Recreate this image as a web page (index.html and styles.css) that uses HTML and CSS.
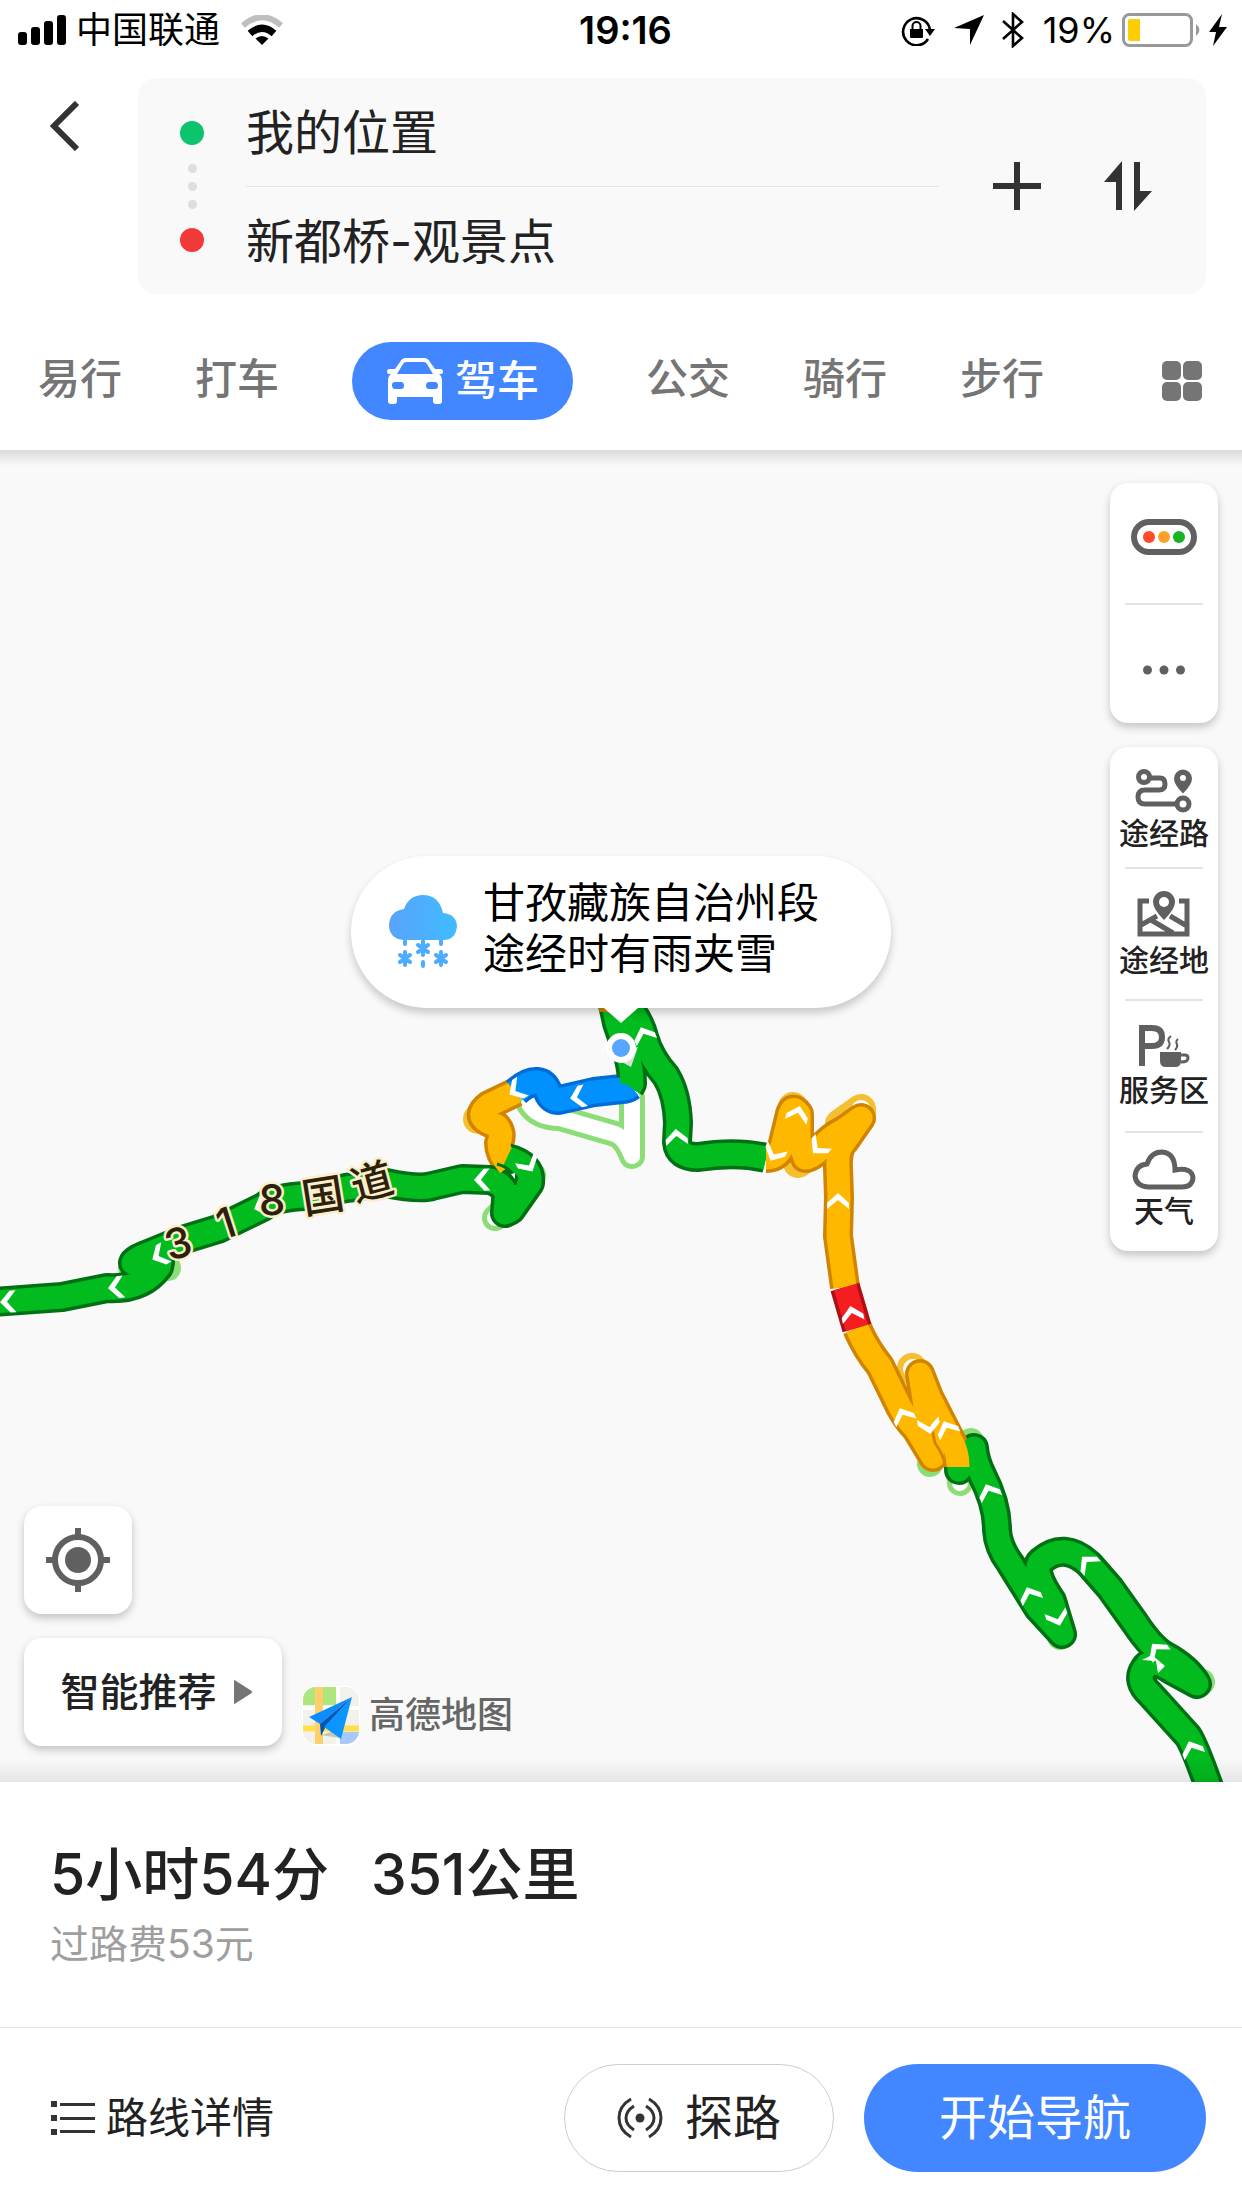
FILE: index.html
```html
<!DOCTYPE html>
<html lang="zh-CN">
<head>
<meta charset="utf-8">
<meta name="viewport" content="width=device-width">
<title>路线规划</title>
<link rel="stylesheet" href="styles.css">
</head>
<body>
<header class="header">
  <div class="status">
    <div class="status-side">
      <svg class="signal" width="48" height="30" viewBox="0 0 48 30"><rect y="17" width="9" height="13" rx="3"/><rect x="13" y="12" width="9" height="18" rx="3"/><rect x="26" y="6" width="9" height="24" rx="3"/><rect x="39" width="9" height="30" rx="3"/></svg>
      <span class="carrier">中国联通</span>
      <svg width="42" height="30" viewBox="0 0 42 30"><path d="M2 10.500Q21 -6 40 10.500" fill="none" stroke="#bfbfbf" stroke-width="6"/><path d="M9 18.500Q21 8 33 18.500" fill="none" stroke="#000" stroke-width="7"/><path d="M21 30L14.500 23.500Q21 18.500 27.500 23.500Z"/></svg>
    </div>
    <time class="clock">19:16</time>
    <div class="status-side status-right">
      <svg width="36" height="32" viewBox="0 0 36 32"><path d="M27 25A13.500 13.500 0 1 1 29 16" fill="none" stroke="#000" stroke-width="2.600"/><path d="M24 15h10l-5 7zM9 15h13v8q0 1-1 1H10q-1 0-1-1z"/><path d="M11.500 16v-4a4 4 0 0 1 8 0v4" fill="none" stroke="#000" stroke-width="2"/></svg>
      <svg class="arrow" width="30" height="30" viewBox="0 0 30 30"><path d="M30 0L16 30V14L0 13z"/></svg>
      <svg class="bluetooth" width="22" height="36" viewBox="0 0 22 36"><path d="M1 9L20 26L11 34V2L20 10L1 27" fill="none" stroke="#000" stroke-width="2.600"/></svg>
      <span class="percent">19%</span>
      <svg class="battery" width="78" height="34" viewBox="0 0 78 34"><rect x="1.500" y="1.500" width="68" height="31" rx="6" fill="none" stroke="#999" stroke-width="3"/><path d="M8 6h10v22H8q-2 0-2-2V8q0-2 2-2z" fill="#fc0"/><path d="M74 11q7 6 0 12z" fill="#999"/></svg>
      <svg width="18" height="32" viewBox="0 0 18 32"><path d="M13 0L0 18h7L4 32L18 13h-8z"/></svg>
    </div>
  </div>

  <div class="search">
    <button class="back" type="button" aria-label="返回"><svg width="30" height="50" viewBox="0 0 30 50"><path d="M27 2L4 25L27 48" fill="none" stroke="#333" stroke-width="6"/></svg></button>
    <form class="trip">
      <div class="stops" aria-hidden="true"><i class="stop start"></i><i class="dot"></i><i class="dot"></i><i class="dot"></i><i class="stop end"></i></div>
      <div class="fields">
        <input class="field" type="text" aria-label="起点" value="我的位置">
        <input class="field" type="text" aria-label="终点" value="新都桥-观景点">
      </div>
      <button class="trip-button" type="button" aria-label="添加途经点"><svg width="48" height="48" viewBox="0 0 48 48"><path d="M24 0v48M0 24h48" stroke="#333" stroke-width="6"/></svg></button>
      <button class="trip-button" type="button" aria-label="交换起终点"><svg width="48" height="50" viewBox="0 0 48 50" fill="#333"><path d="M18 0V49H12V21H0zM30 50V1H36V30H48z"/></svg></button>
    </form>
  </div>

  <nav class="modes">
    <button class="mode" type="button">易行</button>
    <button class="mode" type="button">打车</button>
    <button class="mode active" type="button"><svg width="56" height="46" viewBox="0 0 56 46" fill="#fff"><path fill-rule="evenodd" d="M19 0H37Q41 0 43 4L48 11H54Q56 11 56 13.500Q56 16 54 16H52Q55 18 55 23V43Q55 46 52 46H49Q46 46 46 43V39H10V43Q10 46 7 46H4Q1 46 1 43V23Q1 18 4 16H2Q0 16 0 13.500Q0 11 2 11H8L13 4Q15 0 19 0zM19 4Q17 4 16 6L10 16H46L40 6Q39 4 37 4zM8 24Q5 24 5 27Q5 31 8 31H14Q17 31 17 27.500Q17 24 14 24zM42 24Q39 24 39 27.500Q39 31 42 31H48Q51 31 51 27.500Q51 24 48 24z"/></svg>驾车</button>
    <button class="mode" type="button">公交</button>
    <button class="mode" type="button">骑行</button>
    <button class="mode" type="button">步行</button>
    <button class="mode more" type="button" aria-label="更多"><svg width="40" height="40" viewBox="0 0 40 40" fill="#757575"><rect width="19" height="19" rx="5"/><rect x="21" width="19" height="19" rx="5"/><rect y="21" width="19" height="19" rx="5"/><rect x="21" y="21" width="19" height="19" rx="5"/></svg></button>
  </nav>
</header>

<main class="map">
  <svg class="roads" viewBox="0 450 1242 1332" preserveAspectRatio="xMidYMid slice" role="img" aria-label="318国道路线">
    <defs>
      <path id="west" d="M-20 1303L62 1297L107 1288Q142 1290 159 1267L160 1262L133 1263Q134 1259 153 1252L182 1240L218 1229L263 1207Q275 1197 307 1196L346 1188L386 1183Q420 1190 432 1186L462 1179L490 1180Q508 1186 506 1200L505 1213L511 1210L530 1183Q532 1164 507 1158"/>
      <path id="amber-west" d="M516 1092L489 1105Q475 1115 488 1122L497 1126Q503 1134 499 1143Q499 1154 509 1166"/>
      <path id="azure" d="M516 1092Q528 1081 537 1082Q545 1083 548 1092Q551 1100 559 1100L594 1092L622 1089Q627 1089 631 1086"/>
      <path id="centre" d="M630 1087L632 1084Q632 1068 627 1052L617 1023L612 1000M622 1000Q639 1017 644 1037Q650 1058 666 1076Q677 1094 678 1123L677 1142Q678 1157 698 1157Q736 1151 766 1158"/>
      <path id="amber-east" d="M766 1158Q780 1158 783 1143L790 1114Q793 1105 799 1114V1140L805 1158Q812 1158 822 1147Q830 1137 844 1130L861 1118L845 1141Q837 1148 838 1168L839 1197L838 1236L845 1287"/>
      <path id="crimson" d="M845 1287L857 1328"/>
      <path id="amber-south" d="M857 1328Q866 1349 880 1366L900 1407Q907 1420 916 1429L933 1457L920 1374L929 1397L951 1440Q958 1451 958 1467"/>
      <path id="south" d="M959 1467V1470L974 1448Q975 1461 982 1475Q997 1504 997 1530Q998 1547 1010 1563L1038 1608L1062 1634L1052 1601Q1031 1570 1041 1561Q1064 1541 1089 1564L1110 1588L1135 1623Q1151 1647 1164 1655Q1188 1668 1197 1684L1173 1671Q1151 1656 1144 1669Q1136 1681 1150 1694L1188 1736Q1194 1745 1208 1784L1215 1805"/>
      <path id="chevron" d="M0 -3L11 7V13L0 4L-11 13V7z"/>
    </defs>
    <g class="line ghost-green">
      <path d="M529 1104Q538 1118 560 1118L615 1134Q625 1138 632 1156V1098"/>
      <path d="M505 1208L495 1218M165 1268H168M135 1265L131 1268M530 1173L533 1175M974 1448L971 1441M959 1472L960 1483M933 1458L930 1464M1062 1634L1060 1637M1197 1684L1202 1682"/>
    </g>
    <g class="line ghost-white">
      <path d="M529 1104Q538 1118 560 1118L615 1134Q625 1138 632 1156V1098M505 1208L495 1218M959 1472L960 1483"/>
    </g>
    <g class="line ghost-amber"><path d="M861 1118V1109L840 1124M922 1380L912 1368M805 1158L798 1163M483 1114L478 1119M793 1110V1107"/></g>
    <g class="line ghost-white wide"><path d="M861 1118V1110M922 1380L913 1369"/></g>

    <g class="line edge">
      <use href="#amber-west" class="amber-edge"/>
      <use href="#azure" class="azure-edge"/>
      <use href="#west" class="green-edge"/>
      <use href="#centre" class="green-edge"/>
      <use href="#south" class="green-edge round"/>
      <use href="#amber-east" class="amber-edge"/>
      <use href="#amber-south" class="amber-edge"/>
      <use href="#crimson" class="crimson-edge"/>
    </g>
    <g class="line fill">
      <use href="#west" class="green"/>
      <use href="#amber-west" class="amber"/>
      <use href="#azure" class="azure"/>
      <use href="#centre" class="green"/>
      <use href="#south" class="green round"/>
      <use href="#amber-east" class="amber"/>
      <use href="#amber-south" class="amber"/>
      <use href="#crimson" class="crimson"/>
    </g>
    <path d="M511 1149L517 1149L526 1155L522 1178L508 1170L503 1166z" fill="#02bb1f"/>
    <path d="M497 1164Q512 1168 516 1180L515 1185" class="seam green-seam"/>
    <path d="M511 1174L515 1173L515 1179z" fill="#fff"/>
    <path d="M598 1008h13l-2 5q-4-2-9-1z" fill="#d18400"/>
    <path d="M931 1425L935 1443Q945 1457 945 1467" class="seam"/>

    <g fill="#fff">
      <use href="#chevron" transform="translate(3 1302) rotate(-93)"/>
      <use href="#chevron" transform="translate(111 1288) rotate(-97)"/>
      <use href="#chevron" transform="translate(155 1258) rotate(-118)"/>
      <use href="#chevron" transform="translate(257 1208) rotate(-110)"/>
      <use href="#chevron" transform="translate(477 1180) rotate(-92)"/>
      <use href="#chevron" transform="translate(531 1169) rotate(150)"/>
      <use href="#chevron" transform="translate(512 1093) rotate(-122)"/>
      <use href="#chevron" transform="translate(573 1098) rotate(-102)"/>
      <use href="#chevron" transform="translate(642 1030) rotate(-22)"/>
      <use href="#chevron" transform="translate(676 1132) rotate(-5)"/>
      <use href="#chevron" transform="translate(772 1158) rotate(207)"/>
      <use href="#chevron" transform="translate(799 1109) rotate(15)"/>
      <use href="#chevron" transform="translate(815 1151) rotate(222)"/>
      <use href="#chevron" transform="translate(838 1196)"/>
      <use href="#chevron" transform="translate(851 1309) rotate(-12)"/>
      <use href="#chevron" transform="translate(901 1411) rotate(-24)"/>
      <use href="#chevron" transform="translate(930 1431) rotate(170)"/>
      <use href="#chevron" transform="translate(945 1424) rotate(-24)"/>
      <use href="#chevron" transform="translate(987 1487) rotate(-22)"/>
      <use href="#chevron" transform="translate(1028 1590) rotate(-22)"/>
      <use href="#chevron" transform="translate(1059 1623) rotate(162)"/>
      <use href="#chevron" transform="translate(1084 1559) rotate(-42)"/>
      <use href="#chevron" transform="translate(1154 1646) rotate(-38)"/>
      <path d="M1142 1660L1152 1655L1165 1666L1158 1673L1156 1661z"/>
      <use href="#chevron" transform="translate(1190 1744) rotate(-22)"/>
    </g>
    <g class="road-name">
      <text transform="translate(178 1243) rotate(-15)" y="15">3</text>
      <text transform="translate(226 1223) rotate(-18)" y="15">1</text>
      <text transform="translate(272 1200) rotate(-2)" y="15">8</text>
      <text transform="translate(323 1196) rotate(-9)" y="15">国</text>
      <text transform="translate(372 1182) rotate(-15)" y="15">道</text>
    </g>
    <path d="M609 1055l22 12l7-20z" fill="#dcdcdc"/>
    <circle cx="621" cy="1048" r="15" fill="#fff"/><circle cx="621" cy="1048" r="9" fill="#57a6ff"/>
  </svg>

  <div class="bubble">
    <svg width="68" height="74" viewBox="0 0 68 74">
      <defs><linearGradient id="sky"><stop offset="0" stop-color="#5aa2fd"/><stop offset="1" stop-color="#3fbcff"/></linearGradient></defs>
      <path fill="url(#sky)" d="M15 45Q0 44 0 29.500Q1 16 15 14Q20 0 34 0Q50 0 54 18Q67 19 68 31Q67 45 54 45z"/>
      <g fill="none" stroke="#4cacff" stroke-width="4" stroke-linecap="round"><path d="M16 46v3M34 46v14M52 46v3M34 67v4M16 57v13M52 57v13M11 60l10 7M21 60l-10 7M47 60l10 7M57 60l-10 7M29 50l10 7M39 50l-10 7"/></g>
    </svg>
    <p class="bubble-text">甘孜藏族自治州段<br>途经时有雨夹雪</p>
  </div>

  <aside class="tools">
    <div class="panel">
      <button class="tool lights" type="button" aria-label="路况"><svg width="66" height="36" viewBox="0 0 66 36"><rect x="3" y="3" width="60" height="30" rx="15" fill="none" stroke="#606060" stroke-width="6"/><circle cx="18" cy="18" r="6" fill="#ff4a2b"/><circle cx="33" cy="18" r="6" fill="#ffa126"/><circle cx="48" cy="18" r="6" fill="#1bb324"/></svg></button>
      <button class="tool low" type="button" aria-label="更多"><svg width="42" height="10" viewBox="0 0 42 10" fill="#606060"><circle cx="4.500" cy="5" r="4.500"/><circle cx="21" cy="5" r="4.500"/><circle cx="37.500" cy="5" r="4.500"/></svg></button>
    </div>
    <div class="panel">
      <button class="tool via" type="button"><svg width="58" height="44" viewBox="0 0 58 44" fill="none" stroke="#606060" stroke-width="5"><circle cx="9" cy="8" r="5.500"/><path d="M15 9H25Q30 9 30 15Q30 21 24 21H10Q3 21 3 28Q3 35 10 35H42"/><circle cx="48" cy="35" r="6"/><path d="M48 23Q40 15 40 9.500A8 8 0 0 1 56 9.500Q56 15 48 23z" fill="#606060" stroke-width="2"/><circle cx="48" cy="9" r="3" fill="#fff" stroke="none"/></svg>途经路</button>
      <button class="tool tall" type="button"><svg width="54" height="48" viewBox="0 0 54 48" fill="none" stroke="#606060" stroke-width="5"><path d="M12 11H3V44H50V11H42M4 35L20 26M14 30L36 43M33 26L50 36"/><path d="M27 30Q16 19 16 12A11 11 0 0 1 38 12Q38 19 27 30z" fill="#606060" stroke="none"/><circle cx="27" cy="12" r="5" fill="#fff" stroke="none"/></svg>途经地</button>
      <button class="tool tall" type="button"><svg width="52" height="44" viewBox="0 0 52 44" fill="none" stroke="#606060"><path d="M4 42V4H14Q24 4 24 13Q24 22 14 22H4" stroke-width="6"/><path d="M22 28H43V37Q43 43 37 43H28Q22 43 22 37z" fill="#606060" stroke="none"/><path d="M42 31H47Q50 31 50 34Q50 38 43 38" stroke-width="3"/><path d="M33 12Q29 15 31 18Q33 21 29 25M40 15Q37 18 39 20Q40 23 37 26" stroke-width="2"/></svg>服务区</button>
      <button class="tool weather" type="button"><svg width="64" height="42" viewBox="0 0 64 42"><path d="M16 38Q4 37 3 27Q4 16 15 15Q19 3 30 3Q43 4 43 21Q60 18 61 29Q60 38 50 38z" fill="none" stroke="#606060" stroke-width="5"/></svg>天气</button>
    </div>
  </aside>

  <div class="corner">
    <button class="card locate" type="button" aria-label="定位"><svg width="64" height="64" viewBox="0 0 64 64" fill="none" stroke="#606060" stroke-width="6"><circle cx="32" cy="32" r="23"/><circle cx="32" cy="32" r="13" fill="#606060" stroke="none"/><path d="M32 0v8M32 56v8M0 32h8M56 32h8"/></svg></button>
    <div class="corner-row">
      <button class="card prefer" type="button">智能推荐<svg width="18" height="24" viewBox="0 0 18 24"><path d="M0 1Q0-1 2 1L17 10.500Q19 12 17 13.500L2 23Q0 25 0 23z" fill="#757575"/></svg></button>
      <div class="brand">
        <svg width="58" height="60" viewBox="0 0 58 60"><defs><clipPath id="tile"><rect x="1" y="1" width="56" height="57" rx="13"/></clipPath></defs><rect width="58" height="60" rx="14" fill="#fff"/><g clip-path="url(#tile)"><path fill="#f2f1ec" d="M0 0h58v60H0z"/><path fill="#aee67e" d="M0 0h34v19H0z"/><path fill="#a7c9ff" d="M38 46h20v14H38z"/><path d="M36 0v60M0 22h58" stroke="#fff" stroke-width="4"/><path d="M0 42.500h58" stroke="#ffdf4d" stroke-width="6"/><path d="M17 0v60" stroke="#ffd069" stroke-width="8"/></g><path d="M19 49l19 3l-9-6z" fill="#c9c4b4"/><path d="M50 11L7 31L18 38z" fill="#0c8dff"/><path d="M50 11L18 38L19 50L24 40z" fill="#0055b0"/><path d="M50 11L22 41L39 53z" fill="#0c95ff"/></svg>
        <span>高德地图</span>
      </div>
    </div>
  </div>
</main>

<footer class="sheet">
  <section class="summary">
    <h1 class="total"><span>5小时54分</span><span>351公里</span></h1>
    <p class="toll">过路费53元</p>
  </section>
  <div class="actions">
    <a class="details" href="#details"><svg width="44" height="34" viewBox="0 0 44 34" fill="#333"><path d="M0 0h6v6H0zM9 2h35v3H9zM0 14h6v6H0zM9 16h35v3H9zM0 28h6v6H0zM9 29h35v3H9z"/></svg>路线详情</a>
    <button class="pill probe" type="button"><svg width="46" height="42" viewBox="0 0 46 42" fill="none" stroke="#333" stroke-width="3"><circle cx="23" cy="21" r="4.500" fill="#333" stroke="none"/><path d="M14 2Q2 9 2 21Q2 33 14 40M32 2Q44 9 44 21Q44 33 32 40M17 9Q9 14 9 21Q9 28 17 33M29 9Q37 14 37 21Q37 28 29 33"/></svg>探路</button>
    <button class="pill go" type="button">开始导航</button>
  </div>
</footer>
</body>
</html>
```

FILE: styles.css
```css
* { box-sizing: border-box; }
body {
  margin: 0;
  min-height: 100vh;
  display: flex;
  flex-direction: column;
  background: #fff;
  color: #222;
  font-family: Inter, "Noto Sans CJK SC", sans-serif;
  line-height: 1.2;
}
button, input { font: inherit; color: inherit; border: 0; padding: 0; margin: 0; background: none; }
button { cursor: pointer; }
p, h1 { margin: 0; }
svg { display: block; flex: none; }

/* header */
.header { position: relative; padding-bottom: 30px; background: #fff; }
.status {
  display: grid;
  grid-template-columns: 1fr auto 1fr;
  align-items: center;
  height: 60px;
  padding: 0 15px 0 18px;
  color: #000;
  font-size: 36px;
  line-height: 60px;
}
.status-side { display: flex; align-items: center; }
.status-right { justify-content: flex-end; }
.carrier { margin: 0 21px 0 10px; }
.clock { padding-left: 6px; font-size: 38px; font-weight: 600; }
.arrow { margin: 0 18px 0 17px; }
.percent { margin: 0 7px 0 19px; }
.battery { margin-right: 9px; }

.search { display: flex; align-items: flex-start; padding: 18px 36px 0 50px; }
.back { width: 88px; padding-top: 23px; }
.trip {
  flex: 1;
  display: flex;
  align-items: center;
  height: 216px;
  padding: 0 54px 0 42px;
  border-radius: 18px;
  background: #f9f9f9;
}
.stops { display: flex; flex-direction: column; align-items: center; gap: 9px; width: 24px; }
.stop { width: 24px; height: 24px; border-radius: 50%; margin: 10px 0; }
.start { background: #0dc46e; }
.end { background: #f13939; }
.dot { width: 9px; height: 9px; border-radius: 50%; background: #dedede; }
.fields { flex: 1; margin-left: 42px; }
.field {
  display: block;
  width: 100%;
  height: 108px;
  padding-bottom: 6px;
  font-size: 48px;
}
.field + .field { border-top: 1px solid #e4e4e4; }
.trip-button { margin-left: 54px; }
.trip-button + .trip-button { margin-left: 63px; }

.modes { display: flex; align-items: center; gap: 73px; padding: 48px 40px 0 38px; }
.mode { height: 78px; padding-bottom: 3px; color: #757575; font-size: 42px; font-weight: 500; }
.mode.active {
  display: flex;
  align-items: center;
  gap: 12px;
  padding: 0 34px 0 35px;
  border-radius: 39px;
  background: #4287ff;
  color: #fff;
}
.more { margin-left: auto; padding: 0; }

/* map */
.map {
  position: relative;
  flex: 1;
  min-height: 1200px;
  overflow: hidden;
  background: #f9f9f9;
}
.map::before, .map::after { content: ""; position: absolute; left: 0; right: 0; z-index: 1; }
.map::before { top: 0; height: 16px; background: linear-gradient(rgba(0, 0, 0, 0.12), transparent); }
.map::after { bottom: 0; height: 24px; background: linear-gradient(transparent, rgba(0, 0, 0, 0.08)); }
.roads { position: absolute; inset: 0; width: 100%; height: 100%; }
.line { fill: none; stroke-linejoin: round; }
.edge { stroke-width: 30px; }
.fill { stroke-width: 23px; }
.round { stroke-linecap: round; }
.green-edge { stroke: #007014; }
.green { stroke: #02bb1f; }
.amber-edge { stroke: #d18400; }
.amber { stroke: #ffb800; }
.azure-edge { stroke: #006cd9; }
.azure { stroke: #0091ff; }
.crimson-edge { stroke: #ad0f14; }
.crimson { stroke: #f41d20; }
.ghost-green { stroke: #8cdd75; stroke-width: 26px; stroke-linecap: round; }
.ghost-amber { stroke: #f4c030; stroke-width: 30px; stroke-linecap: round; }
.ghost-white { stroke: #fff; stroke-width: 16px; stroke-linecap: round; }
.ghost-white.wide { stroke-width: 20px; }
.seam { fill: none; stroke: #d18400; stroke-width: 3px; }
.green-seam { stroke: #007014; }
.road-name {
  fill: #2e210c;
  stroke: #fbeecb;
  stroke-width: 5px;
  stroke-linejoin: round;
  paint-order: stroke;
  font-size: 42px;
  font-weight: 500;
  text-anchor: middle;
}

.bubble {
  position: absolute;
  top: 43%;
  left: 50%;
  display: flex;
  align-items: center;
  gap: 26px;
  width: 540px;
  height: 152px;
  margin: -167px 0 0 -270px;
  padding-left: 38px;
  border-radius: 76px;
  background: #fff;
  box-shadow: 0 5px 8px rgba(0, 0, 0, 0.2);
  color: #000;
}
.bubble::after {
  content: "";
  position: absolute;
  top: 100%;
  left: 50%;
  margin-left: -17px;
  border: solid transparent;
  border-width: 15px 17px 0;
  border-top-color: #fff;
}
.bubble-text { padding-bottom: 8px; font-size: 42px; line-height: 51px; white-space: nowrap; }

.tools {
  position: absolute;
  top: 33px;
  right: 24px;
  display: flex;
  flex-direction: column;
  gap: 24px;
  width: 108px;
}
.panel, .card {
  border-radius: 18px;
  background: #fff;
  box-shadow: 0 4px 8px rgba(0, 0, 0, 0.22);
}
.panel { display: flex; flex-direction: column; align-items: center; }
.tool {
  display: flex;
  flex-direction: column;
  align-items: center;
  justify-content: center;
  gap: 2px;
  width: 78px;
  height: 120px;
  font-size: 30px;
  font-weight: 500;
  line-height: 36px;
  white-space: nowrap;
}
.tool + .tool { border-top: 2px solid #e4e4e4; }
.tall { height: 132px; gap: 4px; }
.lights { padding-bottom: 12px; }
.low { padding-top: 12px; }
.via { padding-top: 6px; }
.weather { padding-bottom: 6px; }

.corner { position: absolute; left: 24px; bottom: 36px; display: grid; gap: 24px; }
.corner-row { display: flex; align-items: flex-end; gap: 20px; }
.card { display: flex; align-items: center; justify-content: center; height: 108px; }
.locate { width: 108px; }
.prefer { gap: 17px; width: 258px; padding-left: 6px; font-size: 39px; font-weight: 500; }
.brand { display: flex; align-items: center; gap: 9px; color: #666; font-size: 36px; font-weight: 500; }

/* bottom sheet */
.sheet { background: #fff; }
.summary { height: 246px; padding: 54px 50px 0; border-bottom: 1px solid #e2e2e2; }
.total { display: flex; gap: 42px; font-size: 57px; font-weight: 500; line-height: 78px; }
.toll { color: #9e9e9e; font-size: 39px; line-height: 60px; }
.actions { display: flex; align-items: center; gap: 30px; height: 180px; padding: 0 36px 0 51px; }
.details {
  display: flex;
  align-items: center;
  gap: 11px;
  margin-right: auto;
  color: #222;
  font-size: 42px;
  text-decoration: none;
}
.pill { display: flex; align-items: center; justify-content: center; height: 108px; border-radius: 54px; font-size: 48px; }
.probe { gap: 22px; width: 270px; border: 1px solid #ccc; }
.go { width: 342px; background: #4287ff; color: #fff; }
```
